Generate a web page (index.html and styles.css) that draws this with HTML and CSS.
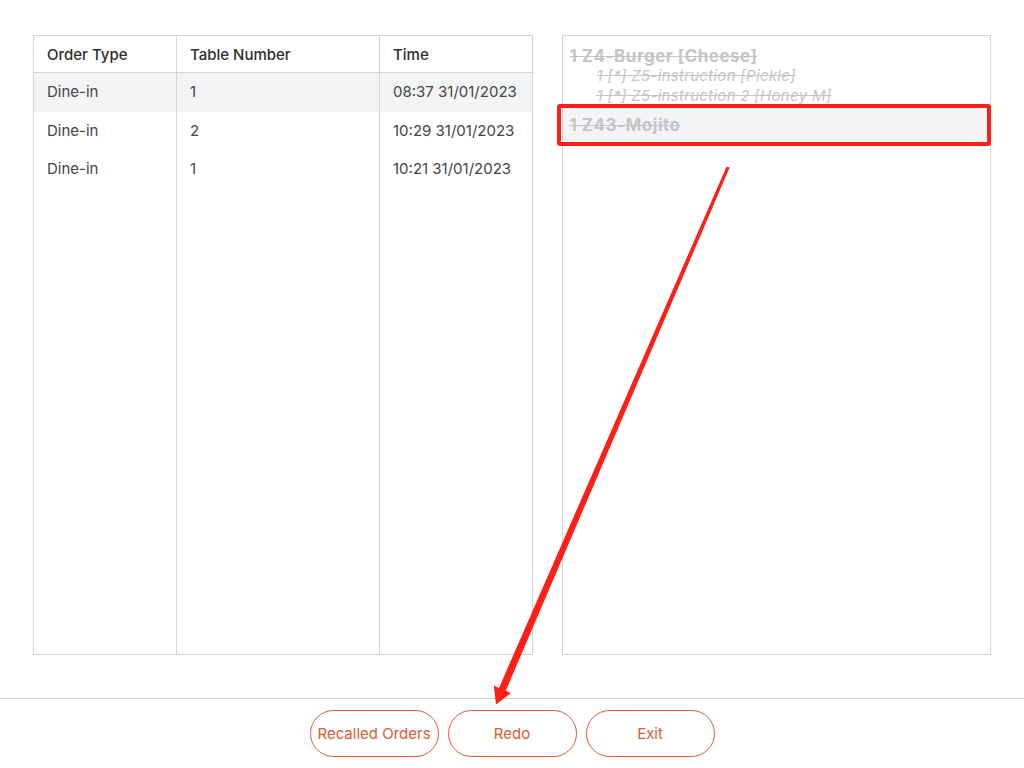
FILE: index.html
```html
<!DOCTYPE html>
<html lang="en">
<head>
    <meta charset="UTF-8">
    <title>Recalled Orders</title>
    <link rel="stylesheet" href="styles.css">
</head>
<body>
    <div class="main">
        <div class="orders">
            <div class="cell head">Order Type</div>
            <div class="cell head">Table Number</div>
            <div class="cell head">Time</div>

            <div class="cell on">Dine-in</div>
            <div class="cell on">1</div>
            <div class="cell on">08:37 31/01/2023</div>

            <div class="cell">Dine-in</div>
            <div class="cell">2</div>
            <div class="cell">10:29 31/01/2023</div>

            <div class="cell">Dine-in</div>
            <div class="cell">1</div>
            <div class="cell">10:21 31/01/2023</div>

            <div class="cell fill"></div>
            <div class="cell fill"></div>
            <div class="cell fill"></div>
        </div>
        <div class="items">
            <div class="item">1 Z4-Burger [Cheese]</div>
            <div class="sub">1 [*] Z5-instruction [Pickle]</div>
            <div class="sub">1 [*] Z5-instruction 2 [Honey M]</div>
            <div class="item picked">1 Z43-Mojito</div>
        </div>
    </div>
    <div class="foot">
        <a href="javascript:;" class="btn">Recalled Orders</a>
        <a href="javascript:;" class="btn">Redo</a>
        <a href="javascript:;" class="btn">Exit</a>
    </div>

    <div class="mark-box"></div>
    <svg class="mark-arrow" width="1024" height="768" viewBox="0 0 1024 768">
        <polygon fill="#ff1f17" points="726.6,166.4 729.6,167.6 505.8,690.7 510.8,693.2 496,704.5 493.8,685.4 499.0,687.9"/>
    </svg>
</body>
</html>
```

FILE: styles.css
```css
*{
    margin: 0;
    padding: 0;
    box-sizing: border-box;
}
body{
    background: #fff;
    font-family: Inter, "Liberation Sans", sans-serif;
    color: #3a3a3a;
    width: 1024px;
    height: 768px;
    overflow: hidden;
}
.main{
    display: flex;
    gap: 29px;
    padding: 35px 33px 0 33px;
    height: 655px;
    margin-bottom: 43px;
}
.orders{
    width: 501px;
    border: 1px solid #d3d3d3;
    display: grid;
    grid-template-columns: 143px 203px 1fr;
    grid-template-rows: 37px 39px 38px 38px 1fr;
}
.cell{
    border-right: 1px solid #d3d3d3;
    padding-left: 13px;
    font-size: 15px;
    line-height: 38px;
    color: #444;
}
.cell:nth-child(3n){
    border-right: none;
}
.cell.head{
    border-bottom: 1px solid #d3d3d3;
    font-weight: 500;
    color: #2e2e2e;
    line-height: 38px;
}
.cell.on{
    background: #f3f4f6;
}
.items{
    width: 429px;
    border: 1px solid #d3d3d3;
    padding: 10px 0 0 0;
}
.item{
    padding-left: 6px;
    font-size: 17px;
    font-weight: 700;
    letter-spacing: 0.5px;
    line-height: 20px;
    color: #c3c5c9;
    text-decoration: line-through;
}
.sub{
    padding-left: 33px;
    font-size: 15px;
    font-style: italic;
    letter-spacing: 0.3px;
    line-height: 20px;
    color: #c3c5c9;
    text-decoration: line-through;
}
.item.picked{
    margin-top: 2px;
    line-height: 34px;
    background: #f3f4f6;
}
.foot{
    border-top: 1px solid #d5d5d5;
    display: flex;
    justify-content: center;
    gap: 9px;
    padding-top: 11px;
}
.btn{
    width: 129px;
    height: 47px;
    border: 1px solid #de5a33;
    border-radius: 24px;
    color: #de5a33;
    font-size: 15px;
    text-decoration: none;
    display: flex;
    align-items: center;
    justify-content: center;
}
.mark-box{
    position: absolute;
    left: 557px;
    top: 104px;
    width: 434px;
    height: 42px;
    border: 4px solid #ff1f17;
    border-radius: 3px;
}
.mark-arrow{
    position: absolute;
    left: 0;
    top: 0;
    pointer-events: none;
}
```
